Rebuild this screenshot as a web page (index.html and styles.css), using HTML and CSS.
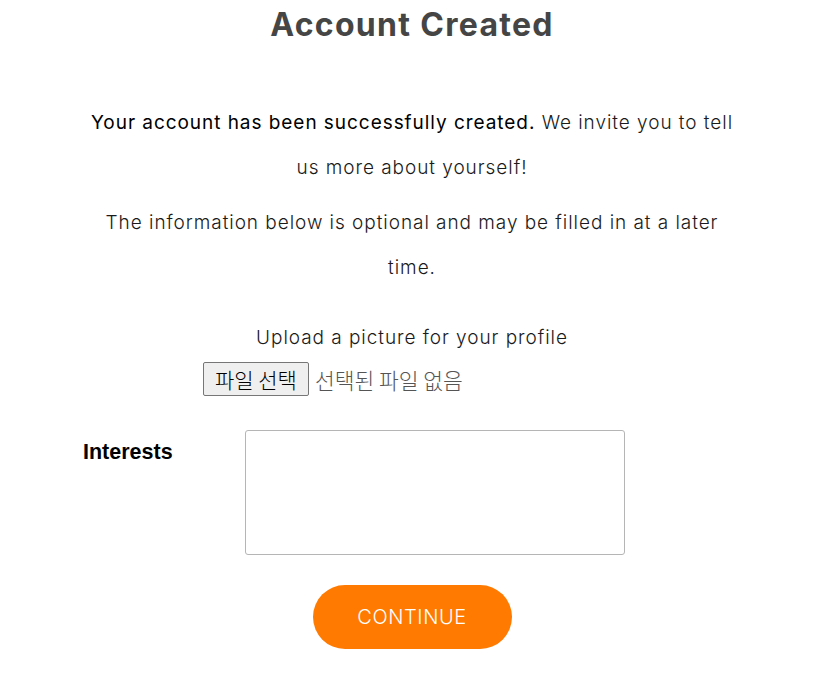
FILE: index.html
```html
<!DOCTYPE html>
<html lang="en">
<head>
<meta charset="utf-8">
<title>Account Created</title>
<link rel="stylesheet" href="styles.css">
</head>
<body>
<main class="page">
  <h1 class="title">Account Created</h1>
  <section class="intro">
    <p class="intro-text"><span class="strong">Your account has been successfully created.</span> We invite you to tell<br>us more about yourself!</p>
    <p class="intro-text">The information below is optional and may be filled in at a later<br>time.</p>
  </section>
  <form class="profile-form">
    <div class="upload">
      <label class="upload-label">Upload a picture for your profile</label>
      <div class="file-row">
        <button type="button" class="file-btn">파일 선택</button>
        <span class="file-status">선택된 파일 없음</span>
      </div>
    </div>
    <div class="field-row">
      <label class="field-label" for="interests">Interests</label>
      <textarea id="interests" class="field-input"></textarea>
    </div>
    <div class="actions">
      <button type="button" class="continue-btn">CONTINUE</button>
    </div>
  </form>
</main>
</body>
</html>
```

FILE: styles.css
```css
html, body {
  margin: 0;
  padding: 0;
  background: #ffffff;
}

.page {
  width: 824px;
  font-family: "Inter", "Noto Sans", sans-serif;
  color: #1a1a1a;
}

.title {
  margin: 0;
  padding-top: 5px;
  text-align: center;
  font-size: 32px;
  line-height: 40px;
  font-weight: 700;
  letter-spacing: 1.3px;
  color: #454545;
}

.intro {
  margin-top: 55px;
  display: flex;
  flex-direction: column;
  gap: 10px;
}

.intro-text {
  margin: 0;
  text-align: center;
  font-size: 19px;
  line-height: 45px;
  font-weight: 300;
  letter-spacing: 0.95px;
  white-space: nowrap;
}

.strong {
  font-weight: 400;
  color: #000;
}

.profile-form {
  margin-top: 35px;
  display: flex;
  flex-direction: column;
}

.upload {
  display: flex;
  flex-direction: column;
  align-items: center;
}

.upload-label {
  font-size: 19px;
  line-height: 26px;
  font-weight: 300;
  letter-spacing: 0.95px;
}

.file-row {
  margin-top: 11px;
  align-self: flex-start;
  margin-left: 203px;
  display: flex;
  align-items: center;
  gap: 6px;
  font-family: "Noto Sans CJK KR", sans-serif;
}

.file-btn {
  height: 34px;
  padding: 0 11px;
  background: #efefef;
  border: 1px solid #767676;
  border-radius: 2px;
  font-family: "Noto Sans CJK KR", sans-serif;
  font-size: 21px;
  font-weight: 300;
  line-height: 1;
  color: #000;
}

.file-status {
  font-size: 21.5px;
  font-weight: 300;
  color: #555;
}

.field-row {
  margin-top: 34px;
  display: flex;
  align-items: flex-start;
}

.field-label {
  width: 162px;
  padding-left: 83px;
  padding-top: 10px;
  font-family: "Liberation Sans", Arial, sans-serif;
  font-weight: 700;
  font-size: 21.5px;
  color: #000;
}

.field-input {
  box-sizing: border-box;
  width: 380px;
  height: 125px;
  border: 1px solid #b5b5b5;
  border-radius: 3px;
  resize: none;
  margin: 0;
}

.actions {
  margin-top: 30px;
  display: flex;
  justify-content: center;
}

.continue-btn {
  width: 199px;
  height: 64px;
  border: none;
  border-radius: 32px;
  background: #ff7a00;
  color: #ffffff;
  font-family: "Inter", sans-serif;
  font-weight: 300;
  font-size: 20px;
  letter-spacing: 0.6px;
}
```
